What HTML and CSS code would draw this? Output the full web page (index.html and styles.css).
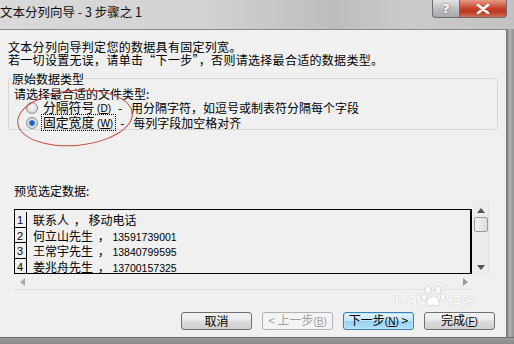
FILE: index.html
```html
<!DOCTYPE html>
<html lang="zh">
<head>
<meta charset="utf-8">
<link rel="stylesheet" href="styles.css">
</head>
<body>
<div class="window">
  <div class="titlebar">
    <span class="title">文本分列向导 - 3 步骤之 1</span>
    <div class="caption-btns">
      <div class="cbtn help">?</div>
      <div class="cbtn close">
        <svg width="14" height="10" viewBox="0 0 14 10"><path d="M2 1 L12 9 M12 1 L2 9" stroke="#fff" stroke-width="2.6" stroke-linecap="round"/></svg>
      </div>
    </div>
  </div>
  <div class="body-row">
    <div class="client">
      <div class="intro">
        <div>文本分列向导判定您的数据具有固定列宽。</div>
        <div>若一切设置无误，请单击“下一步”，否则请选择最合适的数据类型。</div>
      </div>
      <fieldset class="group">
        <legend>原始数据类型</legend>
        <div class="prompt">请选择最合适的文件类型:</div>
        <div class="radio-row">
          <span class="radio"></span>
          <span class="rlabel">分隔符号 <span class="key">(<u>D</u>)</span></span>
          <span class="dash">-</span>
          <span class="rdesc">用分隔字符，如逗号或制表符分隔每个字段</span>
        </div>
        <div class="radio-row">
          <span class="radio checked"></span>
          <span class="rlabel focus">固定宽度 <span class="key">(<u>W</u>)</span></span>
          <span class="dash">-</span>
          <span class="rdesc">每列字段加空格对齐</span>
        </div>
      </fieldset>
      <div class="ellipse"></div>
      <div class="preview-label">预览选定数据:</div>
      <div class="preview-wrap">
        <div class="preview-main">
          <div class="preview">
            <div class="prow"><span class="num">1</span><span class="cell">联系人 <span class="comma">，</span> 移动电话</span></div>
            <div class="prow"><span class="num">2</span><span class="cell">何立山先生 <span class="comma">，</span> <span class="digits">13591739001</span></span></div>
            <div class="prow"><span class="num">3</span><span class="cell">王常宇先生 <span class="comma">，</span> <span class="digits">13840799595</span></span></div>
            <div class="prow"><span class="num">4</span><span class="cell">姜兆舟先生 <span class="comma">，</span> <span class="digits">13700157325</span></span></div>
          </div>
          <div class="hscroll">
            <svg width="5" height="8" viewBox="0 0 5 8"><path d="M5 0 L0 4 L5 8 Z" fill="#aaa"/></svg>
            <svg width="5" height="8" viewBox="0 0 5 8"><path d="M0 0 L5 4 L0 8 Z" fill="#999"/></svg>
          </div>
        </div>
        <div class="vscroll">
          <svg width="8" height="5" viewBox="0 0 8 5"><path d="M0 5 L4 0 L8 5 Z" fill="#555"/></svg>
          <div class="thumb"></div>
          <div class="vspacer"></div>
          <svg width="8" height="5" viewBox="0 0 8 5"><path d="M0 0 L4 5 L8 0 Z" fill="#555"/></svg>
        </div>
      </div>
      <div class="watermark">
        <span>Bai</span>
        <svg width="26" height="24" viewBox="0 0 26 24"><g fill="#fff" stroke="#d4d4d4" stroke-width="1"><ellipse cx="7" cy="5" rx="3" ry="4"/><ellipse cx="17" cy="5" rx="3" ry="4"/><ellipse cx="3" cy="12" rx="2.5" ry="3.5"/><ellipse cx="22" cy="12" rx="2.5" ry="3.5"/><path d="M12 11 C6 11 4 20 8 21 C10 22 11 20 12 20 C13 20 15 22 17 21 C21 20 18 11 12 11 Z"/></g></svg>
        <span class="wm-cn">经验</span>
      </div>
      <div class="buttons">
        <button class="btn">取消</button>
        <button class="btn disabled">&lt; 上一步<span class="key">(<u>B</u>)</span></button>
        <button class="btn default">下一步<span class="key">(<u>N</u>)</span> &gt;</button>
        <button class="btn">完成<span class="key">(<u>F</u>)</span></button>
      </div>
    </div>
    <div class="rframe"></div>
  </div>
  <div class="bframe"></div>
</div>
</body>
</html>
```

FILE: styles.css
```css
* { box-sizing: border-box; }
html, body { margin: 0; padding: 0; }
body {
  width: 514px;
  height: 344px;
  overflow: hidden;
  font-family: "Noto Sans CJK SC", "DejaVu Sans", sans-serif;
  font-size: 12px;
  color: #000;
  background: #9a9a9a;
}
.window {
  width: 514px;
  height: 344px;
  display: flex;
  flex-direction: column;
}
.titlebar {
  height: 29px;
  flex: none;
  display: flex;
  justify-content: space-between;
  align-items: flex-start;
  background: linear-gradient(90deg, #d9d9d9 0%, #d2d2d2 40%, #bdbdbd 65%, #cbcbcb 80%, #c2c2c2 100%);
}
.title {
  font-size: 12.5px;
  line-height: 14px;
  margin-top: 5px;
  color: #111;
}
.caption-btns {
  display: flex;
  margin-right: 7px;
}
.cbtn {
  height: 18px;
  display: flex;
  align-items: center;
  justify-content: center;
  border: 1px solid #6d6d6d;
  border-top: none;
}
.help {
  width: 27px;
  border-radius: 0 0 0 4px;
  background: linear-gradient(#e2e2e2, #bcbcbc 55%, #a9a9a9);
  color: #fff;
  font-family: "DejaVu Sans", sans-serif;
  font-weight: bold;
  font-size: 13px;
  text-shadow: 0 0 2px #555;
  border-right: none;
}
.close {
  width: 48px;
  border-radius: 0 0 4px 0;
  background: linear-gradient(#e49a86, #c7422a 50%, #b93820 70%, #d0705a);
}
.body-row {
  flex: 1;
  display: flex;
  min-height: 0;
}
.client {
  flex: 1;
  background: #f0f0f0;
  border-top: 1px solid #8a8a8a;
  border-right: 1px solid #7a7a7a;
  padding: 10px 0 0 8px;
  position: relative;
}
.rframe {
  width: 7px;
  background: linear-gradient(90deg, #7c7c7c, #b5b5b5 40%, #8f8f8f);
}
.bframe {
  height: 7px;
  flex: none;
  background: linear-gradient(#9c9c9c, #8a8a8a);
  border-top: 1px solid #6c6c6c;
}
.intro {
  line-height: 13px;
  font-size: 12px;
  letter-spacing: 0.3px;
}
.group {
  margin: 6px 0 0 0;
  width: 490px;
  height: 58px;
  border: 1px solid #d5d5d5;
  border-radius: 3px;
  padding: 0 0 0 5px;
}
.group legend {
  padding: 0 1px;
  margin-left: -3px;
  line-height: 13px;
}
.prompt {
  line-height: 13px;
  margin-top: 2px;
}
.radio-row {
  display: flex;
  align-items: center;
  height: 15px;
  padding-left: 12px;
}
.radio-row:first-of-type { margin-top: 1px; }
.radio {
  width: 12px;
  height: 12px;
  border-radius: 50%;
  border: 1px solid #8d8d8d;
  background: radial-gradient(circle at 50% 40%, #f6f6f6, #cfcfcf);
  margin-right: 4px;
  flex: none;
}
.radio.checked {
  background: radial-gradient(circle, #1b4f9a 0, #3a78c9 2.5px, #dfe6ee 3.6px, #cfcfcf);
}
.rlabel {
  line-height: 13px;
  padding: 0 2px 0 1px;
  font-size: 12.8px;
  white-space: nowrap;
}
.rlabel.focus {
  outline: 1px dotted #000;
}
.key {
  font-family: "Liberation Sans", sans-serif;
  font-size: 10px;
}
.dash {
  margin-left: 5px;
  width: 13px;
}
.rdesc { line-height: 13px; }
.ellipse {
  position: absolute;
  left: 17px;
  top: 60px;
  width: 116px;
  height: 56px;
  border: 1.5px solid #c44a3c;
  border-radius: 50%;
  transform: rotate(-5deg);
  pointer-events: none;
}
.preview-label {
  margin: 54px 0 0 6px;
  line-height: 13px;
}
.preview-wrap {
  display: flex;
  margin: 12px 0 0 6px;
  height: 81px;
}
.preview-main {
  width: 458px;
  display: flex;
  flex-direction: column;
}
.preview {
  height: 65px;
  border: 1px solid #000;
  border-right-width: 2px;
  background: #f0f0f0;
  padding-top: 2px;
  overflow: hidden;
}
.prow {
  display: flex;
  height: 15.7px;
  align-items: stretch;
}
.num {
  width: 12px;
  flex: none;
  border-right: 1px solid #000;
  border-bottom: 1px solid #000;
  font-family: "Liberation Sans", sans-serif;
  font-size: 11px;
  line-height: 16px;
  padding-left: 2px;
}
.cell {
  padding-left: 6px;
  font-size: 12px;
  line-height: 15px;
  white-space: pre;
}
.comma { margin-left: 2px; }
.digits {
  font-family: "Liberation Sans", sans-serif;
  font-size: 10.5px;
}
.hscroll {
  height: 16px;
  display: flex;
  justify-content: space-between;
  align-items: center;
  padding: 0 4px 0 6px;
  border-bottom: 1px solid #e2e2e2;
}
.vscroll {
  width: 16px;
  margin-left: 1px;
  height: 73px;
  margin-top: -8px;
  display: flex;
  flex-direction: column;
  align-items: center;
  padding: 7px 0 4px;
  background: #ececec;
  border-right: 1px solid #e2e2e2;
}
.thumb {
  margin-top: 4px;
  width: 14px;
  height: 15px;
  border: 1px solid #9b9b9b;
  border-radius: 2px;
  background: linear-gradient(90deg, #f4f4f4, #dadada);
}
.vspacer { flex: 1; }
.watermark {
  position: absolute;
  left: 394px;
  top: 255px;
  display: flex;
  align-items: flex-end;
  font-family: "Liberation Sans", sans-serif;
  font-size: 19px;
  line-height: 19px;
  color: #fff;
  text-shadow: 0 0 1px rgba(0,0,0,0.25);
  pointer-events: none;
}
.wm-cn {
  font-family: "Noto Sans CJK SC", sans-serif;
  font-size: 14px;
  line-height: 16px;
}
.buttons {
  display: flex;
  gap: 10px;
  margin: 22px 0 0 173px;
}
.btn {
  width: 71px;
  height: 18px;
  padding: 0;
  font-family: "Noto Sans CJK SC", sans-serif;
  font-size: 12px;
  line-height: 14px;
  border: 1px solid #707070;
  border-radius: 3px;
  background: linear-gradient(#f2f2f2, #ebebeb 45%, #dddddd 50%, #cfcfcf);
  color: #000;
  white-space: nowrap;
}
.btn.disabled {
  color: #a0a0a0;
  border-color: #adb2b5;
  background: #f4f4f4;
}
.btn.default {
  border-color: #3c7fb1;
  background: linear-gradient(#e5f4fc, #c4e5f6 50%, #98d1ef 51%, #b3e0f9);
  box-shadow: inset 0 0 0 1px #bfe6f8;
}
```
